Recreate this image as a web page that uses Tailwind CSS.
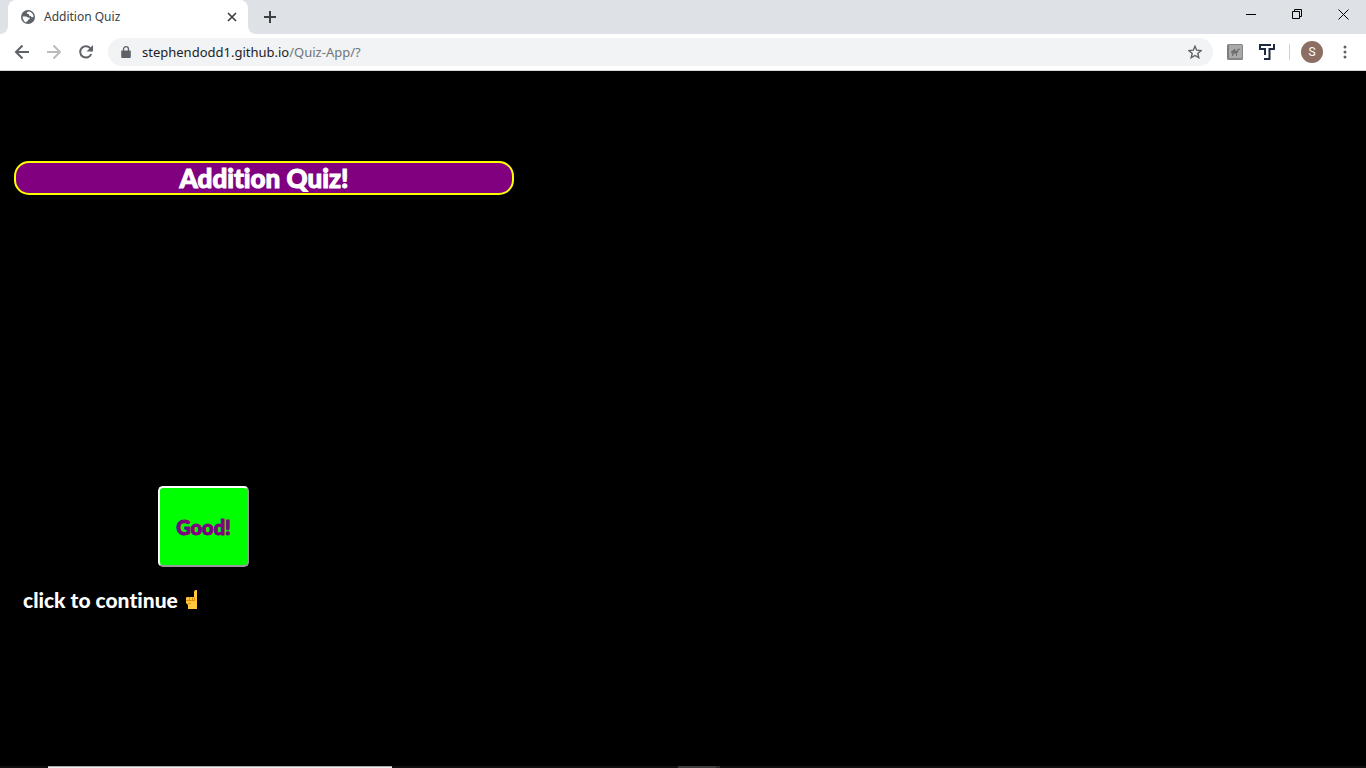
<!DOCTYPE html>
<html lang="en">
<head>
<meta charset="utf-8">
<meta name="viewport" content="width=device-width, initial-scale=1">
<title>Addition Quiz</title>
<script src="https://cdn.jsdelivr.net/npm/@tailwindcss/browser@4"></script>
</head>
<body class="flex min-h-screen flex-col bg-black font-['Noto_Sans',sans-serif]">
<header>
  <div class="flex h-[34px] items-stretch bg-[#dee1e6] pl-2">
    <div class="relative flex w-60 items-center rounded-t-lg bg-white pr-[10px] pl-[13px] text-[#3c4043]">
      <svg class="absolute bottom-0 -left-2 size-2" viewBox="0 0 8 8" aria-hidden="true"><path fill="#fff" d="M8 0v8H0a8 8 0 0 0 8-8z"/></svg>
      <svg class="absolute -right-2 bottom-0 size-2" viewBox="0 0 8 8" aria-hidden="true"><path fill="#fff" d="M0 0v8h8a8 8 0 0 1-8-8z"/></svg>
      <svg class="size-[14px]" viewBox="0 0 14 14" aria-hidden="true"><circle cx="7" cy="7" r="7" fill="#5f6368"/><path fill="#fff" d="M7.600 1.400 5.800 2.600l.2 1.200 1.800.3.2 1.500 1.700.5 1 1.200 1.800-.2A5.600 5.600 0 0 0 7.600 1.400zM1.600 6.400l3.600.2 1.600 1 1.800.2.2 1.200-1.600.8-.5 1.300-1.400.7-.2.7C3.200 11.600 1.500 9.400 1.600 6.400z"/></svg>
      <span class="ml-[9px] flex-1 text-xs">Addition Quiz</span>
      <button class="grid size-3 place-items-center" aria-label="Close tab"><svg class="size-[10px]" viewBox="0 0 10 10" fill="none" stroke="#3c4043" stroke-width="1.700"><path d="M1 1l8 8M9 1 1 9"/></svg></button>
    </div>
    <button class="ml-4 grid w-3 place-items-center" aria-label="New tab"><svg class="size-3" viewBox="0 0 12 12" fill="none" stroke="#3c4043" stroke-width="2"><path d="M6 0v12M0 6h12"/></svg></button>
    <div class="ml-auto flex h-7 items-center">
      <button class="grid w-[46px] place-items-center" aria-label="Minimize"><svg class="size-[10px]" viewBox="0 0 10 10" stroke="#000"><path d="M0 5.500h10"/></svg></button>
      <button class="grid w-[46px] place-items-center" aria-label="Restore"><svg class="size-[10px]" viewBox="0 0 10 10" fill="none" stroke="#000"><path d="M.5 2.500h7v7h-7zM2.500 2.500v-2h7v7h-2"/></svg></button>
      <button class="grid w-[46px] place-items-center" aria-label="Close"><svg class="size-[11px]" viewBox="0 0 11 11" fill="none" stroke="#000"><path d="m.5.5 10 10M10.500.5l-10 10"/></svg></button>
    </div>
  </div>
  <div class="flex h-[37px] items-center border-b border-[#d5d7da] bg-white pr-[17px] pl-[14px]">
    <button class="grid size-4 place-items-center" aria-label="Back"><svg class="size-4" viewBox="0 0 16 16" fill="none" stroke="#5f6368" stroke-width="2"><path d="M15 8H2M8.500 1.500 2 8l6.500 6.500"/></svg></button>
    <button class="ml-4 grid size-4 place-items-center" aria-label="Forward" disabled><svg class="size-4" viewBox="0 0 16 16" fill="none" stroke="#babcbe" stroke-width="2"><path d="M1 8h13M7.500 1.500 14 8l-6.500 6.500"/></svg></button>
    <button class="ml-4 grid size-4 place-items-center" aria-label="Reload"><svg class="size-4" viewBox="0 0 16 16"><path d="M13.200 10A5.700 5.700 0 1 1 12.500 4.500" fill="none" stroke="#5f6368" stroke-width="2"/><path fill="#5f6368" d="M15 1v6.500H8.500z"/></svg></button>
    <div class="ml-[14px] flex h-7 flex-1 items-center rounded-full bg-[#f1f3f4] pr-[11px] pl-[13px]">
      <svg class="h-3 w-[10px]" viewBox="0 0 10 12" aria-hidden="true"><path fill="#5f6368" d="M1 4.500h8q.8 0 .8.800V11q0 1-1 1H1.200q-1 0-1-1V5.300q0-.8.800-.8z"/><path fill="none" stroke="#5f6368" stroke-width="1.300" d="M2.500 5V3.200a2.500 2.500 0 0 1 5 0V5"/></svg>
      <a href="#" class="ml-[11px] flex-1 text-[13px] leading-5 text-[#202124]">stephendodd1.github.io<span class="text-[#70757a]">/Quiz-App/?</span></a>
      <button aria-label="Bookmark this page" class="grid size-[14px] place-items-center"><svg class="size-[14px]" viewBox="0 0 14 14" fill="none" stroke="#5f6368" stroke-width="1.400"><path d="m7 1.200 1.700 4 4.400.4-3.300 2.900 1 4.200L7 10.500l-3.800 2.200 1-4.200L.9 5.600l4.400-.4z"/></svg></button>
    </div>
    <button class="ml-[14px]" aria-label="Camel extension"><svg class="size-4" viewBox="0 0 16 16"><rect width="16" height="16" rx="1.500" fill="#858585"/><rect x="2" y="1" width="13" height="13" fill="#a9a9a9"/><path d="M1 2v12" stroke="#666" stroke-dasharray="1 1"/><path fill="#6e6e6e" d="M4 8q.5-2 2-1.500.5-1.500 1.500-1.500T9 7h1l.5-2 2-.5.500 1-1.500.5-.3 2-1.200 1v3H9V9.500H7L6 12H5l.3-3L4.500 8.500 4 10z"/></svg></button>
    <button class="ml-4" aria-label="T extension"><svg class="size-4" viewBox="0 0 16 16" fill="none" stroke="#1d2940" stroke-width="2"><path d="M12 1H1v4h5v6M15 0v5h-4.500v10H5"/></svg></button>
    <span class="ml-[14px] h-4 w-px bg-[#d0d2d5]"></span>
    <button class="ml-[11px] grid size-[22px] place-items-center rounded-full bg-[#8d6e63] font-[Roboto,sans-serif] text-xs text-white" aria-label="Profile S">S</button>
    <button class="ml-[18px] w-2" aria-label="Menu"><svg class="h-[14px] w-2" viewBox="0 0 8 14" fill="#5f6368"><circle cx="4" cy="2" r="1.500"/><circle cx="4" cy="7" r="1.500"/><circle cx="4" cy="12" r="1.500"/></svg></button>
  </div>
</header>
<main class="flex-1 px-[14px] pt-[90px] font-[Lato,'Open_Sans',sans-serif] font-black [font-variant-ligatures:none] [-webkit-text-stroke:1px_currentColor]">
  <h1 class="w-full max-w-[500px] rounded-[15px] border-2 border-[#ff0] bg-[#800080] text-center text-[26px] leading-[30px] text-white">Addition Quiz!</h1>
  <button class="mt-[291px] ml-36 block h-[81px] w-[91px] rounded-[5px] border-2 border-t-white border-r-[#999] border-b-[#999] border-l-white bg-[#0f0] text-xl text-[#800080] [-webkit-text-stroke:1px_currentColor]">Good!</button>
  <p class="mt-[18px] ml-[9px] flex items-center text-[21px] leading-[30px] text-white [-webkit-text-stroke:0px]">click to continue
    <svg class="ml-2 h-5 w-3" viewBox="0 0 12 20" role="img" aria-label="pointing up"><path fill="#ffc83d" d="M8 2q0-2 2-2h1v19H2v-4L0 13V8q0-1 1.500-1H8z"/><path fill="none" stroke="#d67d00" stroke-width=".8" d="M3.500 7v3.500M6.500 7v3.500M0 10.500h9M8.500 7v3.500M2 13.500h3"/></svg>
  </p>
</main>
<footer class="flex h-[2px] bg-[#101010]" aria-hidden="true">
  <span class="ml-12 w-[344px] border-t border-[#aaa] bg-[#eee]"></span>
  <span class="ml-[286px] w-[38px] bg-[#3c3c3c]"></span>
  <span class="w-1 bg-[#2a2a2a]"></span>
</footer>
</body>
</html>
